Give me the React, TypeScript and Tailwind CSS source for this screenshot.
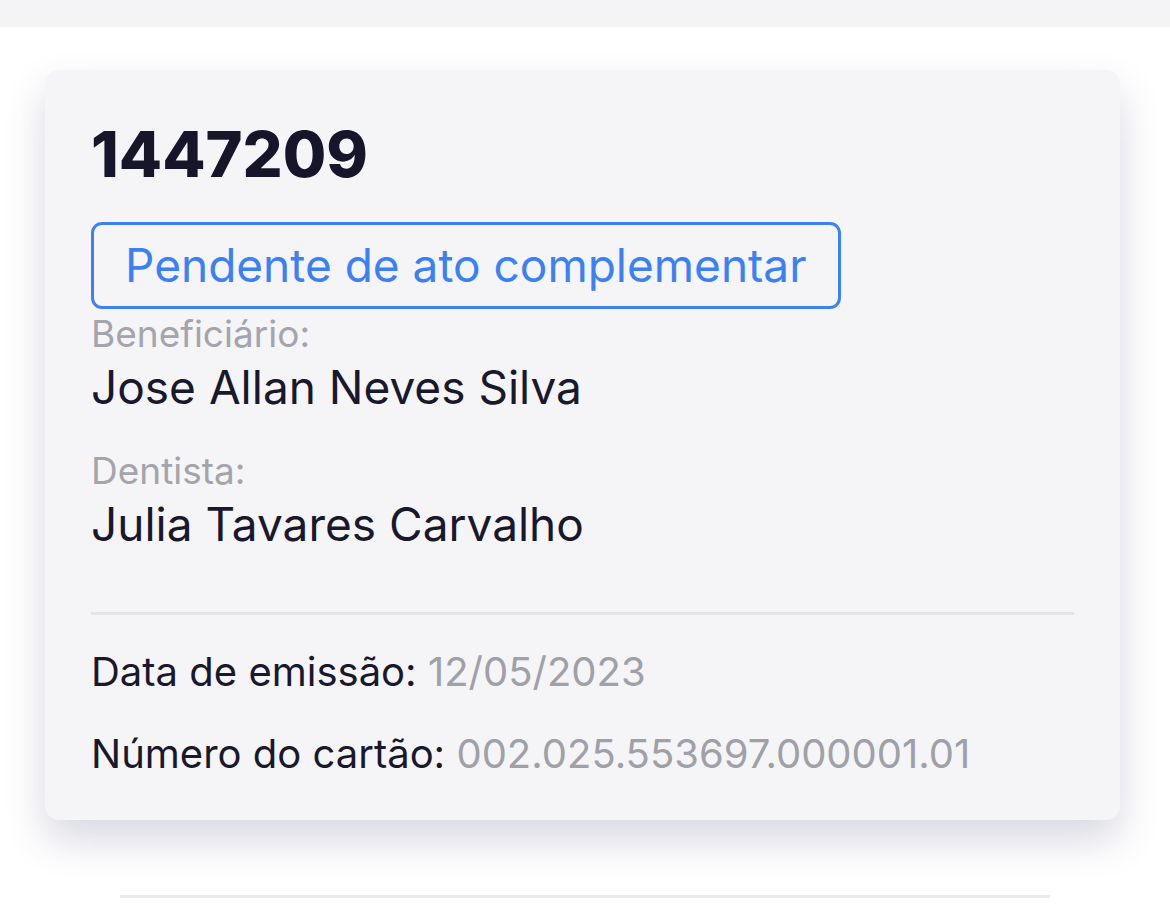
import React from "react";

type InfoRow = { label: string; value: string };

const guide = {
	id: "1447209",
	status: "Pendente de ato complementar",
	beneficiary: "Jose Allan Neves Silva",
	dentist: "Julia Tavares Carvalho",
};

const footerRows: InfoRow[] = [
	{ label: "Data de emissão:", value: "12/05/2023" },
	{ label: "Número do cartão:", value: "002.025.553697.000001.01" },
];

const Field: React.FC<{ label: string; value: string; className?: string }> = ({
	label,
	value,
	className = "",
}) => (
	<div className={className}>
		<div className="text-[37px] leading-[48px] text-[#a4a4ac]">{label}</div>
		<div className="text-[46px] leading-[58px] text-[#19182c]">{value}</div>
	</div>
);

export default function App() {
	return (
		<div
			className="min-h-[905px] w-full bg-white"
			style={{ fontFamily: "Inter, 'Noto Sans', sans-serif" }}
		>
			{/* top bar */}
			<div className="h-[27px] bg-[#f4f4f7]" />

			<div className="px-[45px] pt-[43px]">
				<div className="w-[1075px] rounded-[14px] bg-[#f5f5f8] px-[46px] pt-[46px] pb-[41px] shadow-[0_20px_40px_rgba(60,60,110,0.2)]">
					<h1 className="text-[63px] leading-[76px] font-extrabold text-[#16152a]">
						{guide.id}
					</h1>

					<div className="mt-[30px] inline-block rounded-[11px] border-[3px] border-[#3b80f5] px-[31px] py-[12px]">
						<span className="block text-[46px] leading-[57px] text-[#3b80f5]">
							{guide.status}
						</span>
					</div>

					<Field label="Beneficiário:" value={guide.beneficiary} className="mt-[1px]" />
					<Field label="Dentista:" value={guide.dentist} className="mt-[31px]" />

					<div className="mt-[59px] h-[3px] bg-[#e5e5e9]" />

					<div className="mt-[32px] flex flex-col gap-[32px]">
						{footerRows.map((row) => (
							<div key={row.label} className="text-[40px] leading-[50px]">
								<span className="text-[#19182c]">{row.label}</span>{" "}
								<span className="text-[#a0a0a8]">{row.value}</span>
							</div>
						))}
					</div>
				</div>
			</div>

			<div className="mx-[120px] mt-[75px] h-[3px] w-[930px] bg-[#ebebed]" />
		</div>
	);
}
